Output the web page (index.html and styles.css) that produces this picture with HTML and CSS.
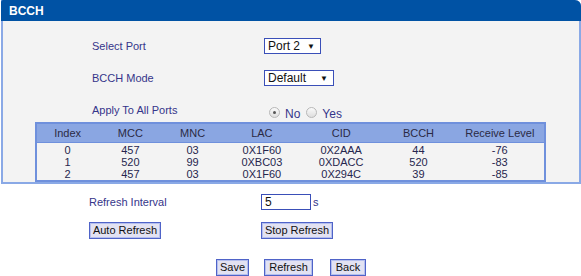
FILE: index.html
```html
<!DOCTYPE html>
<html lang="en">
<head>
    <meta charset="UTF-8">
    <title>BCCH</title>
    <link rel="stylesheet" href="styles.css">
</head>
<body>

<div class="box">
    <div class="box-title">BCCH</div>
    <div class="box-body">
        <div class="form-row">
            <span class="label">Select Port</span>
            <span class="select sel-port">Port 2 <span class="arrow">▼</span></span>
        </div>
        <div class="form-row">
            <span class="label">BCCH Mode</span>
            <span class="select sel-mode">Default <span class="arrow">▼</span></span>
        </div>
        <div class="form-row row-apply">
            <span class="label">Apply To All Ports</span>
            <span class="radios">
                <span class="radio checked"></span><span class="radio-text">No</span>
                <span class="radio"></span><span class="radio-text">Yes</span>
            </span>
        </div>

        <table class="grid">
            <colgroup>
                <col style="width: 62px"><col style="width: 64px"><col style="width: 60px"><col style="width: 78px">
                <col style="width: 80px"><col style="width: 74px"><col style="width: 89px">
            </colgroup>
            <thead>
                <tr>
                    <th>Index</th><th>MCC</th><th>MNC</th><th>LAC</th><th>CID</th><th>BCCH</th><th>Receive Level</th>
                </tr>
            </thead>
            <tbody>
                <tr><td>0</td><td>457</td><td>03</td><td>0X1F60</td><td>0X2AAA</td><td>44</td><td>-76</td></tr>
                <tr><td>1</td><td>520</td><td>99</td><td>0XBC03</td><td>0XDACC</td><td>520</td><td>-83</td></tr>
                <tr><td>2</td><td>457</td><td>03</td><td>0X1F60</td><td>0X294C</td><td>39</td><td>-85</td></tr>
            </tbody>
        </table>
    </div>
</div>

<div class="refresh">
    <div class="refresh-row">
        <span class="label">Refresh Interval</span>
        <span class="input">5</span><span class="unit">s</span>
    </div>
    <div class="refresh-row row-btns">
        <span class="label"><button class="btn btn-wide">Auto Refresh</button></span>
        <button class="btn btn-wide">Stop Refresh</button>
    </div>
</div>

<div class="actions">
    <button class="btn btn-save">Save</button>
    <button class="btn btn-refresh">Refresh</button>
    <button class="btn btn-back">Back</button>
</div>

</body>
</html>
```

FILE: styles.css
```css
* {
    box-sizing: border-box;
}

body {
    margin: 0;
    background-color: #ffffff;
    font-family: "Liberation Sans", Arial, sans-serif;
    font-size: 11px;
    color: #35358a;
}

.box {
    width: 580px;
    margin-left: 1px;
    border: 2px solid #8aa9e6;
    border-top: none;
    border-radius: 0 6px 0 0;
    background-color: #f3f3f3;
}

.box-title {
    height: 21px;
    margin: 0 -2px;
    padding-left: 8px;
    line-height: 22px;
    background-color: #0052a4;
    border-radius: 2px 6px 0 0;
    color: #ffffff;
    font-weight: bold;
    font-size: 12px;
}

.box-body {
    padding: 9px 0 0 0;
}

.form-row {
    display: flex;
    align-items: center;
    height: 32px;
}

.label {
    width: 261px;
    padding-left: 89px;
    flex-shrink: 0;
}

.select {
    display: flex;
    justify-content: space-between;
    align-items: center;
    height: 16px;
    padding: 0 5px 0 3px;
    border: 1px solid #3a4fb8;
    background-color: #ffffff;
    color: #111111;
    font-size: 12px;
}

.sel-port { width: 57px; }
.sel-mode { width: 70px; }

.arrow {
    font-size: 8px;
}

.row-apply {
    height: 28px;
    align-items: flex-start;
    padding-top: 10px;
}

.row-apply .label {
    line-height: 12px;
}

.radios {
    display: flex;
    align-items: center;
    padding-left: 5px;
    margin-top: -1px;
}

.radio {
    position: relative;
    width: 11px;
    height: 11px;
    margin-right: 5px;
    border: 1px solid #b8b8b8;
    border-radius: 50%;
    background: linear-gradient(#fafafa, #dedede);
}

.radio.checked::after {
    content: "";
    position: absolute;
    left: 3px;
    top: 3px;
    width: 3px;
    height: 3px;
    border-radius: 50%;
    background-color: #555555;
}

.radio-text {
    margin-right: 6px;
    margin-top: 4px;
    font-size: 12px;
}

.grid {
    width: 511px;
    margin-left: 32px;
    table-layout: fixed;
    border-collapse: collapse;
    border: 2px solid #6f90dc;
    color: #26264e;
    font-size: 11px;
}

.grid th {
    height: 19px;
    padding: 0;
    background-color: #8aa6e2;
    font-weight: normal;
    color: #2a2a44;
    border-bottom: 1px solid #6f90dc;
}

.grid td {
    height: 12px;
    padding: 0;
    line-height: 12px;
    text-align: center;
    background-color: #f3f3f3;
}

.grid tbody tr:first-child td {
    height: 13px;
    padding-top: 1px;
}

.refresh {
    padding: 10px 0 0 89px;
}

.refresh-row {
    display: flex;
    align-items: center;
    height: 16px;
}

.refresh-row .label {
    width: 172px;
    padding-left: 0;
}

.row-btns {
    height: 17px;
    margin-top: 12px;
}

.input {
    width: 50px;
    height: 16px;
    padding-left: 3px;
    border: 1px solid #3a4fb8;
    background-color: #ffffff;
    color: #111111;
    font-size: 12px;
    line-height: 14px;
}

.unit {
    margin-left: 2px;
}

.btn {
    height: 17px;
    padding: 0;
    border: 1px solid #4f63c8;
    box-shadow: inset 0 0 0 1px #b4bfee;
    background-color: #e2e2f2;
    color: #111111;
    font-family: "Liberation Sans", Arial, sans-serif;
    font-size: 11px;
    line-height: 14px;
    white-space: nowrap;
    cursor: pointer;
}

.btn-wide { width: 72px; }
.btn-save { width: 33px; }
.btn-refresh { width: 49px; }
.btn-back { width: 36px; }

.actions {
    display: flex;
    padding: 20px 0 0 216px;
}

.btn-refresh {
    margin-left: 15px;
}

.btn-back {
    margin-left: 17px;
}
```
